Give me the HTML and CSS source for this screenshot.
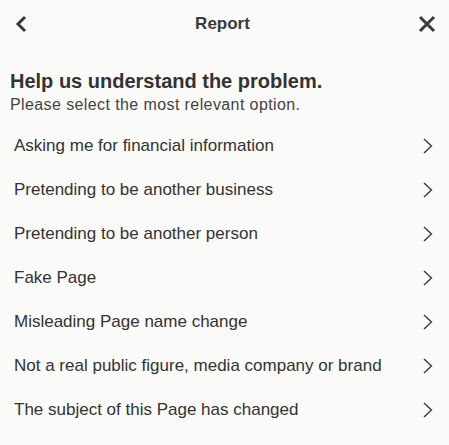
FILE: index.html
```html
<!DOCTYPE html>
<html>
<head>
<meta charset="utf-8">
<link rel="stylesheet" href="styles.css">
</head>
<body>
<div class="page">
  <header class="topbar">
    <button class="icon-btn back" aria-label="Back">
      <svg width="12" height="18" viewBox="0 0 12 18"><path d="M10 2 L3 9 L10 16" fill="none" stroke="#3a3a3a" stroke-width="3"/></svg>
    </button>
    <div class="title">Report</div>
    <button class="icon-btn close" aria-label="Close">
      <svg width="18" height="18" viewBox="0 0 18 18"><path d="M2 2 L16 16 M16 2 L2 16" fill="none" stroke="#3a3a3a" stroke-width="3"/></svg>
    </button>
  </header>
  <section class="intro">
    <h1 class="heading">Help us understand the problem.</h1>
    <p class="sub">Please select the most relevant option.</p>
  </section>
  <ul class="options">
    <li class="option"><span>Asking me for financial information</span><svg class="chev" width="10" height="16" viewBox="0 0 10 16"><path d="M1 1 L8.5 8 L1 15" fill="none" stroke="#3a3a3a" stroke-width="1.4"/></svg></li>
    <li class="option"><span>Pretending to be another business</span><svg class="chev" width="10" height="16" viewBox="0 0 10 16"><path d="M1 1 L8.5 8 L1 15" fill="none" stroke="#3a3a3a" stroke-width="1.4"/></svg></li>
    <li class="option"><span>Pretending to be another person</span><svg class="chev" width="10" height="16" viewBox="0 0 10 16"><path d="M1 1 L8.5 8 L1 15" fill="none" stroke="#3a3a3a" stroke-width="1.4"/></svg></li>
    <li class="option"><span>Fake Page</span><svg class="chev" width="10" height="16" viewBox="0 0 10 16"><path d="M1 1 L8.5 8 L1 15" fill="none" stroke="#3a3a3a" stroke-width="1.4"/></svg></li>
    <li class="option"><span>Misleading Page name change</span><svg class="chev" width="10" height="16" viewBox="0 0 10 16"><path d="M1 1 L8.5 8 L1 15" fill="none" stroke="#3a3a3a" stroke-width="1.4"/></svg></li>
    <li class="option"><span>Not a real public figure, media company or brand</span><svg class="chev" width="10" height="16" viewBox="0 0 10 16"><path d="M1 1 L8.5 8 L1 15" fill="none" stroke="#3a3a3a" stroke-width="1.4"/></svg></li>
    <li class="option"><span>The subject of this Page has changed</span><svg class="chev" width="10" height="16" viewBox="0 0 10 16"><path d="M1 1 L8.5 8 L1 15" fill="none" stroke="#3a3a3a" stroke-width="1.4"/></svg></li>
  </ul>
</div>
</body>
</html>
```
FILE: styles.css
```css
* { box-sizing: border-box; }
html, body { margin: 0; padding: 0; background: #fafaf8; }
body { font-family: "Liberation Sans", Arial, sans-serif; color: #333; }
.page { width: 449px; height: 445px; overflow: hidden; }
.topbar {
  height: 47px;
  display: flex;
  align-items: center;
  justify-content: space-between;
  padding: 0 12px 0 14px;
}
.icon-btn {
  border: 0; background: none; padding: 0;
  width: 14px; height: 20px;
  display: flex; align-items: center; justify-content: center;
}
.close { width: 20px; }
.title { font-weight: bold; font-size: 17px; color: #3a3a3a; }
.intro { padding: 22px 10px 0 10px; }
.heading { margin: 0; font-size: 20px; font-weight: bold; color: #333; line-height: 24px; }
.sub { margin: 2px 0 0 0; font-size: 16px; color: #444; line-height: 20px; letter-spacing: 0.4px; }
.options { list-style: none; margin: 9px 0 0 0; padding: 0; }
.option {
  height: 44px;
  display: flex; align-items: center; justify-content: space-between;
  padding: 0 16px 0 14px;
  font-size: 17px; color: #333;
}
.chev { display: block; }
```
